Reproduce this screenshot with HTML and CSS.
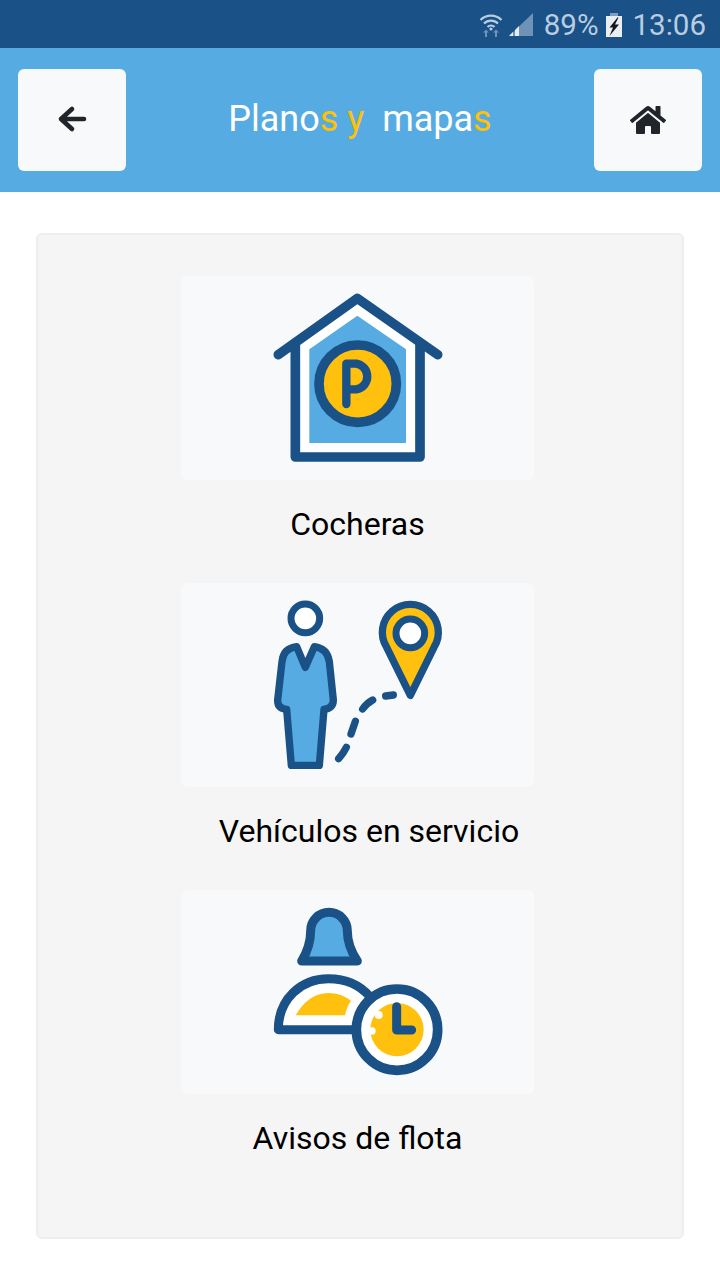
FILE: index.html
```html
<!DOCTYPE html>
<html lang="es">
<head>
    <meta charset="UTF-8">
    <meta name="viewport" content="width=device-width, initial-scale=1.0">
    <title>Planos y mapas</title>
    <link rel="stylesheet" href="styles.css">
</head>
<body>
    <div class="status-bar">
        <svg class="status-wifi" viewBox="0 0 24 25" width="24" height="25">
            <g fill="none" stroke="#b9cde0" stroke-width="2.2">
                <path d="M1.5 8 A15 15 0 0 1 22.5 8"/>
                <path d="M5 11.5 A10 10 0 0 1 19 11.5"/>
                <path d="M8.5 15 A5 5 0 0 1 15.500 15"/>
            </g>
            <circle cx="12" cy="17" r="1.600" fill="#b9cde0"/>
            <path d="M6 25V20.500H4L7 17.500L10 20.500H8V25Z" fill="#6f93b6"/>
            <path d="M16 17.500V22H14L17 25L20 22H18V17.500Z" fill="#6f93b6" transform="rotate(180 17 21.250)"/>
        </svg>
        <svg class="status-signal" viewBox="0 0 24 24" width="24" height="24">
            <path d="M0 23L24 0V23Z" fill="#6f93b6"/>
            <path d="M0 23L4 19V23ZM6 23V17L10 13V23Z" fill="#e4ebf2"/>
        </svg>
        <span class="status-text">89%</span>
        <svg class="status-battery" viewBox="0 0 16 24" width="16" height="24">
            <rect x="4" y="0" width="8" height="4" fill="#7f9fbf"/>
            <rect x="0" y="3" width="16" height="21" fill="#e9eef3"/>
            <path d="M11.500 4.500L3.500 14.500H7L3.500 23L13 11.500H9L12.500 4.500Z" fill="#15171a"/>
        </svg>
        <span class="status-text status-time">13:06</span>
    </div>

    <header class="top-bar">
        <a class="top-btn" href="#" aria-label="Volver">
            <svg class="back-icon" viewBox="0 0 32 28" width="32" height="28">
                <path d="M28 14H5M16 4L5 14L16 24" fill="none" stroke="#212529" stroke-width="4.600" stroke-linecap="round" stroke-linejoin="round"/>
            </svg>
        </a>
        <h1 class="page-title">Plano<span class="accent">s y</span>&nbsp; mapa<span class="accent">s</span></h1>
        <a class="top-btn" href="#" aria-label="Inicio">
            <svg viewBox="0 0 576 512" width="36" height="32">
                <path fill="#212529" d="M280.37 148.26L96 300.11V464a16 16 0 0 0 16 16l112.06-.29a16 16 0 0 0 15.92-16V368a16 16 0 0 1 16-16h64a16 16 0 0 1 16 16v95.64a16 16 0 0 0 16 16.05L464 480a16 16 0 0 0 16-16V300L295.67 148.26a12.19 12.19 0 0 0-15.3 0zM571.6 251.47L488 182.56V44.05a12 12 0 0 0-12-12h-56a12 12 0 0 0-12 12v72.61L318.47 43a48 48 0 0 0-61 0L4.34 251.47a12 12 0 0 0-1.6 16.9l25.5 31A12 12 0 0 0 45.15 301l235.22-193.74a12.19 12.19 0 0 1 15.3 0L530.9 301a12 12 0 0 0 16.9-1.6l25.5-31a12 12 0 0 0-1.7-16.93z"/>
            </svg>
        </a>
    </header>

    <main class="content">
        <section class="panel">
            <a class="menu-item" href="#">
                <div class="tile">
                    <svg viewBox="-6 -12 660 612" width="220" height="204">
                        <path d="M150 190L322 72L497 190V517H150Z" fill="#fff"/>
                        <path d="M178 208L322 107L468 208V489H178Z" fill="#56abe2"/>
                        <path d="M136 190V531H510V190M85 224L322 55L563 224" fill="none" stroke="#1a5186" stroke-width="29" stroke-linecap="round" stroke-linejoin="round"/>
                        <circle cx="323" cy="311" r="116" fill="#ffc00e" stroke="#1a5186" stroke-width="29"/>
                        <path d="M289 372V251H319A39 39 0 0 1 319 328H289" fill="none" stroke="#1a5186" stroke-width="25" stroke-linecap="round" stroke-linejoin="round"/>
                    </svg>
                </div>
                <span class="item-label">Cocheras</span>
            </a>
            <a class="menu-item" href="#">
                <div class="tile">
                    <svg viewBox="-6 -21 660 612" width="220" height="204">
                        <circle cx="166" cy="85" r="43" fill="#fff" stroke="#1a5186" stroke-width="21"/>
                        <path d="M140 170L166 232L193 170Q232 175 238 215L250 330Q250 355 222 358L208 526H124L110 358Q82 355 83 330L96 215Q100 175 140 170Z" fill="#56abe2" stroke="#1a5186" stroke-width="22" stroke-linejoin="round"/>
                        <path d="M481 316L410 172A84 84 0 1 1 552 172Z" fill="#ffc00e" stroke="#1a5186" stroke-width="22" stroke-linejoin="round"/>
                        <circle cx="481" cy="130" r="43" fill="#fff" stroke="#1a5186" stroke-width="21"/>
                        <path d="M407 318L430 315M338 357Q350 340 368 330M303 432L316 394M266 506Q280 490 289 472" fill="none" stroke="#1a5186" stroke-width="22" stroke-linecap="round"/>
                    </svg>
                </div>
                <span class="item-label item-label-shift">Vehículos en servicio</span>
            </a>
            <a class="menu-item" href="#">
                <div class="tile">
                    <svg viewBox="-6 -15 660 612" width="220" height="204">
                        <path d="M155 198C175 165 182 140 182 107A55 55 0 0 1 292 107C292 140 300 165 322 198Z" fill="#56abe2" stroke="#1a5186" stroke-width="27" stroke-linejoin="round"/>
                        <path d="M85 404C85 310 155 251 235 251C285 251 330 270 360 305L330 404Z" fill="#fff" stroke="#1a5186" stroke-width="27" stroke-linejoin="round"/>
                        <path d="M137 361Q175 295 235 294Q275 294 303 318Q290 335 285 361Z" fill="#ffc00e"/>
                        <circle cx="441" cy="404" r="122" fill="#fff" stroke="#1a5186" stroke-width="29"/>
                        <circle cx="441" cy="404" r="80" fill="#ffc00e"/>
                        <circle cx="386" cy="360" r="12" fill="#fff"/>
                        <circle cx="366" cy="408" r="11" fill="#fff"/>
                        <path d="M440 335V405H485" fill="none" stroke="#1a5186" stroke-width="27" stroke-linecap="round" stroke-linejoin="round"/>
                    </svg>
                </div>
                <span class="item-label">Avisos de flota</span>
            </a>
        </section>
    </main>
</body>
</html>
```

FILE: styles.css
```css
body {
    font-family: 'Roboto', sans-serif;
    background-color: #fff;
    margin: 0;
    padding: 0;
}
.status-bar {
    display: flex;
    align-items: center;
    justify-content: flex-end;
    height: 48px;
    padding-right: 14px;
    background: #1a5186;
}
.status-wifi {
    margin-right: 6px;
}
.status-signal {
    margin-right: 11px;
    margin-top: 2px;
}
.status-text {
    padding-top: 3px;
    color: #b9cde0;
    font-size: 29.5px;
    line-height: 45px;
}
.status-battery {
    margin-left: 7px;
    margin-right: 11px;
    margin-top: 1px;
}
.top-bar {
    display: flex;
    align-items: center;
    justify-content: space-between;
    height: 144px;
    padding: 0 18px;
    background: #56abe2;
}
.top-btn {
    display: flex;
    align-items: center;
    justify-content: center;
    width: 108px;
    height: 102px;
    background: #f8f9fa;
    border-radius: 6px;
}
.back-icon {
    margin-bottom: 2px;
}
.page-title {
    margin: 0 0 2px;
    color: #fff;
    font-size: 36px;
    font-weight: 400;
}
.accent {
    color: #ffc107;
}
.content {
    padding: 41px 36px;
}
.panel {
    box-sizing: border-box;
    height: 1006px;
    padding: 41px 0 0 143px;
    background: #f5f5f5;
    border: 2px solid #eee;
    border-radius: 6px;
}
.menu-item {
    display: block;
    width: 353px;
    height: 307px;
    color: #000;
    text-align: center;
    text-decoration: none;
}
.tile {
    display: flex;
    justify-content: center;
    height: 204px;
    background: #f8f9fa;
    border-radius: 6px;
}
.item-label {
    display: block;
    font-size: 32px;
    line-height: 89px;
    text-rendering: optimizeLegibility;
}
.item-label-shift {
    padding-left: 23px;
}
```
